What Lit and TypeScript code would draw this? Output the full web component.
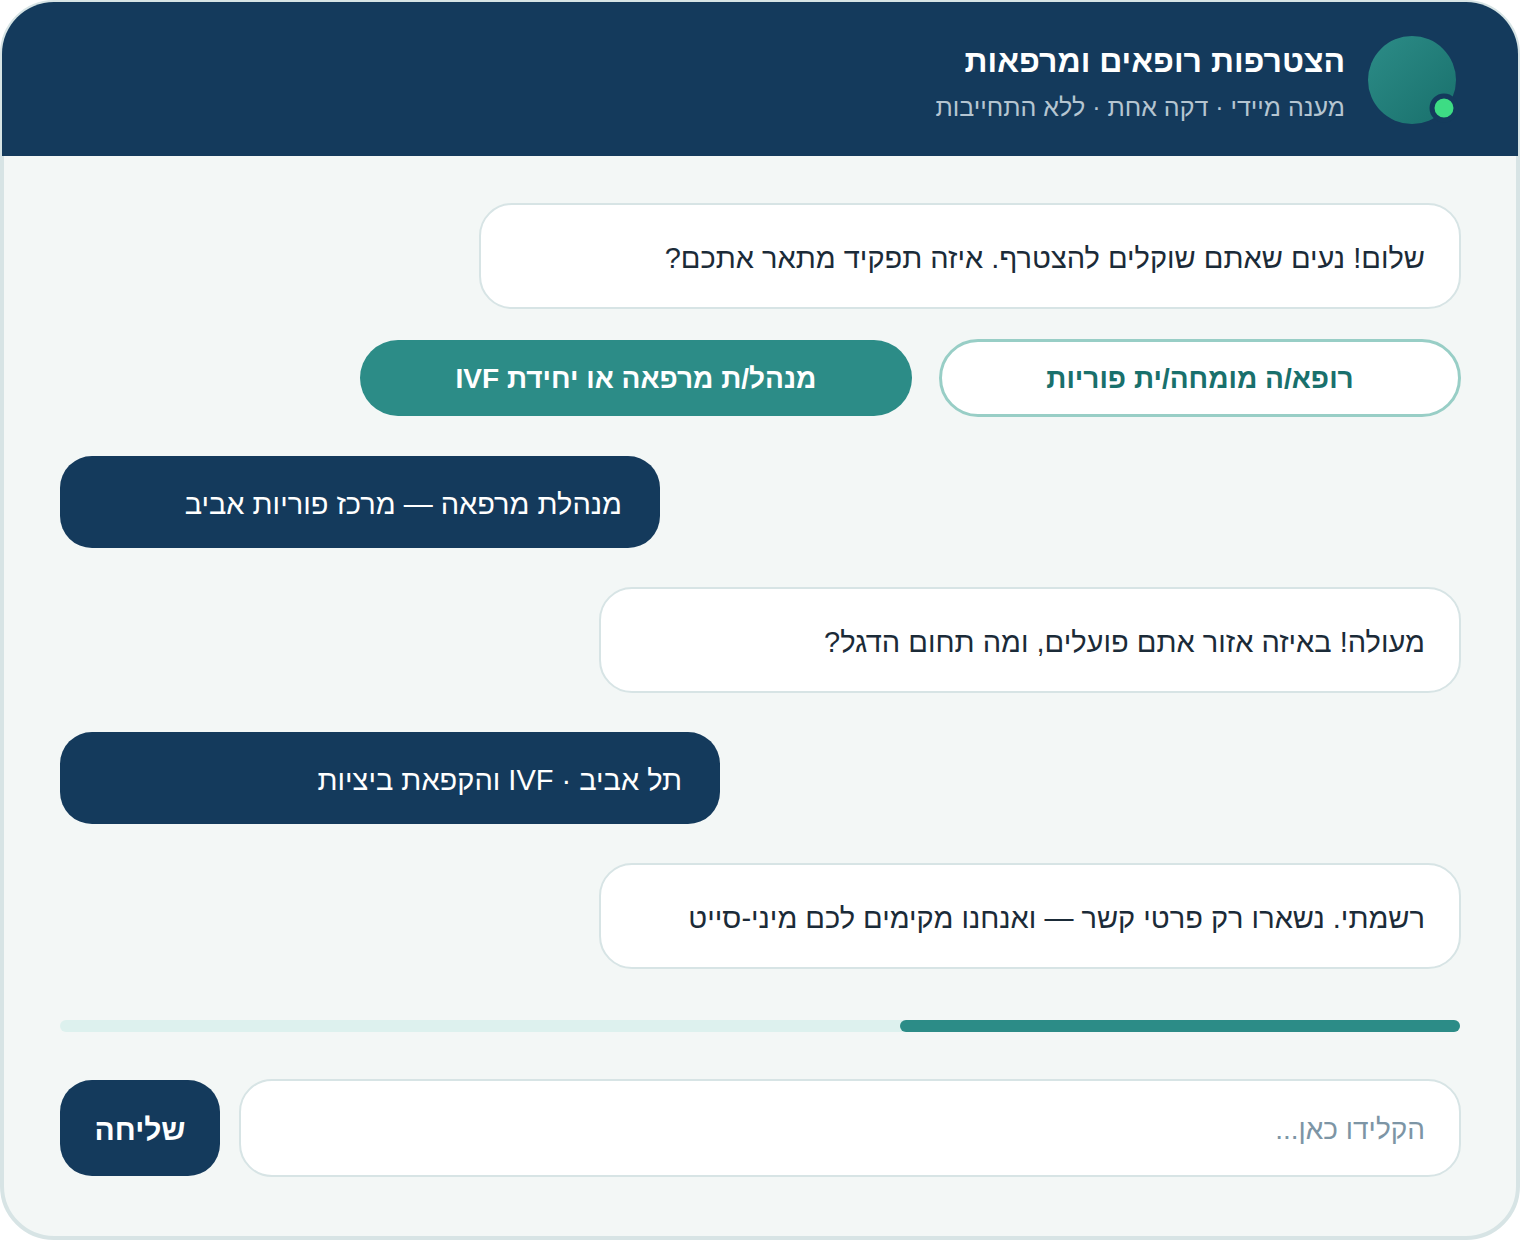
import { LitElement, html, css } from "lit";
import { customElement, state } from "lit/decorators.js";
import { classMap } from "lit/directives/class-map.js";

interface Message {
  from: "bot" | "user";
  text: string;
  /** Width of the bubble, in 350ths of the conversation column. */
  share: number;
}

interface Choice {
  id: string;
  label: string;
  share: number;
}

const GREETING: Message = {
  from: "bot",
  text: "שלום! נעים שאתם שוקלים להצטרף. איזה תפקיד מתאר אתכם?",
  share: 245,
};

const CHOICES: Choice[] = [
  { id: "doctor", label: "רופא/ה מומחה/ית פוריות", share: 130 },
  { id: "manager", label: "מנהל/ת מרפאה או יחידת IVF", share: 138 },
];

const MESSAGES: Message[] = [
  { from: "user", text: "מנהלת מרפאה — מרכז פוריות אביב", share: 150 },
  { from: "bot", text: "מעולה! באיזה אזור אתם פועלים, ומה תחום הדגל?", share: 215 },
  { from: "user", text: "תל אביב · IVF והקפאת ביציות", share: 165 },
  { from: "bot", text: "רשמתי. נשארו רק פרטי קשר — ואנחנו מקימים לכם מיני-סייט", share: 215 },
];

const widthOf = (share: number) => `width: calc(100% * ${share} / 350)`;

@customElement("app-root")
export class AppRoot extends LitElement {
  @state() private selected = "manager";
  @state() private progress = 40;

  static styles = css`
    :host {
      display: block;
      font-family: "Liberation Sans", Arial, sans-serif;
      --navy: #143a5c;
      --teal: #2c8c87;
      --line: #d7e4e5;
    }
    * {
      box-sizing: border-box;
    }
    .card {
      border: 4px solid var(--line);
      border-radius: 54px;
      background: #f3f7f6;
      direction: rtl;
    }
    .header {
      display: flex;
      align-items: center;
      gap: 23px;
      margin: -2px -2px 0;
      padding: 33px 62px 31px;
      border-radius: 52px 52px 0 0;
      background: var(--navy);
    }
    .avatar {
      flex: none;
      display: block;
      overflow: visible;
    }
    .heading {
      display: flex;
      flex-direction: column;
      gap: 10px;
      padding-top: 8px;
    }
    .title {
      margin: 0;
      font-size: 32px;
      line-height: 36px;
      font-weight: 700;
      color: #fff;
    }
    .subtitle {
      margin: 0;
      font-size: 25px;
      line-height: 36px;
      color: #b5c5d1;
    }
    .body {
      padding: 48px 56px 60px;
    }
    .thread {
      display: flex;
      flex-direction: column;
      gap: 40px;
    }
    .opening {
      display: flex;
      flex-direction: column;
      gap: 32px;
    }
    .bubble {
      margin: 0;
      border-radius: 32px;
      font-size: 29px;
      line-height: 36px;
    }
    .bot {
      align-self: flex-start;
      padding: 36px 35px 32px;
      background: #fff;
      outline: 2px solid var(--line);
      outline-offset: -1px;
      color: #1b2b38;
    }
    .user {
      align-self: flex-end;
      padding: 30px 38px 26px;
      background: var(--navy);
      color: #fff;
    }
    .choices {
      display: flex;
      gap: 28px;
    }
    .choice {
      border: 0;
      border-radius: 38px;
      padding: 21px 24px 19px;
      font: 700 28px/36px "Liberation Sans", Arial, sans-serif;
      background: #fff;
      color: #19706c;
      outline: 3px solid #98cec6;
      outline-offset: -2px;
      cursor: pointer;
    }
    .choice.selected {
      background: var(--teal);
      color: #fff;
      outline: none;
    }
    .track {
      height: 12px;
      margin: 52px 0 48px;
      border-radius: 6px;
      background: #ddf1ee;
    }
    .fill {
      height: 100%;
      border-radius: 6px;
      background: var(--teal);
    }
    .composer {
      display: flex;
      gap: 20px;
    }
    .field {
      flex: 1;
      min-width: 0;
      border: 0;
      border-radius: 32px;
      padding: 32px 35px 28px;
      font: 400 28px/36px "Liberation Sans", Arial, sans-serif;
      color: #1b2b38;
      background: #fff;
      outline: 2px solid var(--line);
      outline-offset: -1px;
    }
    .field::placeholder {
      color: #7d95a5;
      opacity: 1;
    }
    .send {
      min-width: 160px;
      border: 0;
      border-radius: 32px;
      padding: 32px 24px 28px;
      font: 700 30px/36px "Liberation Sans", Arial, sans-serif;
      color: #fff;
      background: var(--navy);
      cursor: pointer;
    }
  `;

  private bubble(m: Message) {
    return html`<p
      class=${classMap({ bubble: true, bot: m.from === "bot", user: m.from === "user" })}
      style=${widthOf(m.share)}
    >${m.text}</p>`;
  }

  render() {
    return html`
      <main class="card" lang="he" dir="rtl">
        <header class="header">
          <svg class="avatar" width="88" height="88" viewBox="0 0 88 88" aria-hidden="true">
            <defs>
              <linearGradient id="disc" x1="0" y1="0" x2="1" y2="1">
                <stop offset="0" stop-color="#2c8c87" />
                <stop offset="1" stop-color="#19706c" />
              </linearGradient>
            </defs>
            <circle cx="44" cy="44" r="44" fill="url(#disc)" />
            <circle cx="76" cy="72" r="12" fill="#3ddc84" stroke="#143a5c" stroke-width="5" />
          </svg>
          <div class="heading">
            <h1 class="title">הצטרפות רופאים ומרפאות</h1>
            <p class="subtitle">מענה מיידי · דקה אחת · ללא התחייבות</p>
          </div>
        </header>
        <div class="body">
          <section class="thread">
            <div class="opening">
              ${this.bubble(GREETING)}
              <div class="choices">
                ${CHOICES.map(
                  (c) => html`<button
                    type="button"
                    class=${classMap({ choice: true, selected: c.id === this.selected })}
                    style=${widthOf(c.share)}
                    aria-pressed=${c.id === this.selected}
                    @click=${() => (this.selected = c.id)}
                  >${c.label}</button>`
                )}
              </div>
            </div>
            ${MESSAGES.map((m) => this.bubble(m))}
          </section>
          <div class="track" role="progressbar" aria-valuemin="0" aria-valuemax="100" aria-valuenow=${this.progress}>
            <div class="fill" style="width: ${this.progress}%"></div>
          </div>
          <form class="composer" @submit=${(e: Event) => e.preventDefault()}>
            <input class="field" type="text" aria-label="הקלידו כאן" placeholder="הקלידו כאן..." />
            <button class="send" type="submit">שליחה</button>
          </form>
        </div>
      </main>
    `;
  }
}
